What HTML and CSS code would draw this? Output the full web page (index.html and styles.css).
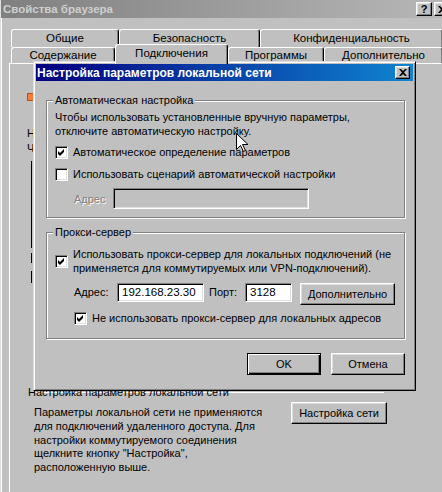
FILE: index.html
```html
<!DOCTYPE html>
<html lang="ru">
<head>
<meta charset="utf-8">
<title>Свойства браузера</title>
<link rel="stylesheet" href="styles.css">
</head>
<body>
<div class="win">
  <div class="titlebar">
    <span class="wtitle">Свойства браузера</span>
    <div class="capbtns">
      <span class="capbtn help">?</span>
      <span class="capbtn">
        <svg width="8" height="7" viewBox="0 0 8 7"><path d="M0 0h2l2 2 2-2h2L5 3.5 8 7H6L4 5 2 7H0l3-3.5z" fill="#000"/></svg>
      </span>
    </div>
  </div>
  <div class="tabs">
    <div class="tabrow back">
      <div class="tab w1">Общие</div>
      <div class="tab w2">Безопасность</div>
      <div class="tab w3">Конфиденциальность</div>
    </div>
    <div class="tabrow front">
      <div class="tab w4">Содержание</div>
      <div class="tab w5 sel">Подключения</div>
      <div class="tab w6">Программы</div>
      <div class="tab w7">Дополнительно</div>
    </div>
  </div>
  <div class="panel">
    <span class="conn-icon"></span>
    <p class="hint">Н<br>Ч</p>
    <div class="listbox"></div>
    <div class="focusdash"></div>
    <div class="lan-head"><span class="lan-title">Настройка параметров локальной сети</span></div>
    <div class="lan-row">
      <p class="lan-text">Параметры локальной сети не применяются<br>для подключений удаленного доступа. Для<br>настройки коммутируемого соединения<br>щелкните кнопку "Настройка",<br>расположенную выше.</p>
      <span class="btn lan-btn">Настройка сети</span>
    </div>
  </div>
</div>

<div class="dialog">
  <div class="dtitlebar">
    <span class="dtitle">Настройка параметров локальной сети</span>
    <span class="capbtn dclose">
      <svg width="8" height="7" viewBox="0 0 8 7"><path d="M0 0h2l2 2 2-2h2L5 3.5 8 7H6L4 5 2 7H0l3-3.5z" fill="#000"/></svg>
    </span>
  </div>

  <div class="group g1">
    <span class="legend">Автоматическая настройка</span>
    <p class="gtext">Чтобы использовать установленные вручную параметры,<br>отключите автоматическую настройку.</p>
    <div class="chkrow r1">
      <span class="chk on"><svg width="7" height="7" viewBox="0 0 7 7"><path d="M0 2l2 2 4-4v3L2 7 0 5z" fill="#000"/></svg></span>
      <span class="chklabel">Автоматическое определение параметров</span>
    </div>
    <div class="chkrow r2">
      <span class="chk"></span>
      <span class="chklabel">Использовать сценарий автоматической настройки</span>
    </div>
    <div class="addrrow">
      <span class="dislabel">Адрес</span>
      <span class="field disabled"></span>
    </div>
  </div>

  <div class="group g2">
    <span class="legend">Прокси-сервер</span>
    <div class="chkrow r3">
      <span class="chk on"><svg width="7" height="7" viewBox="0 0 7 7"><path d="M0 2l2 2 4-4v3L2 7 0 5z" fill="#000"/></svg></span>
      <span class="chklabel">Использовать прокси-сервер для локальных подключений (не<br>применяется для коммутируемых или VPN-подключений).</span>
    </div>
    <div class="proxyrow">
      <span class="plabel l-addr">Адрес:</span>
      <span class="field f-addr">192.168.23.30</span>
      <span class="plabel l-port">Порт:</span>
      <span class="field f-port">3128</span>
      <span class="btn adv-btn">Дополнительно</span>
    </div>
    <div class="chkrow r4">
      <span class="chk on"><svg width="7" height="7" viewBox="0 0 7 7"><path d="M0 2l2 2 4-4v3L2 7 0 5z" fill="#000"/></svg></span>
      <span class="chklabel">Не использовать прокси-сервер для локальных адресов</span>
    </div>
  </div>

  <div class="dbuttons">
    <span class="btn default">OK</span>
    <span class="btn">Отмена</span>
  </div>
</div>

<svg class="cursor" width="12" height="19" viewBox="0 0 12 19"><path d="M0.5 0.5v16l4-4 3 6 2-1-3-6h5.5z" fill="#fff" stroke="#000" stroke-width="1"/></svg>
</body>
</html>
```
FILE: styles.css
```css
html, body {
  margin: 0;
  padding: 0;
}
body {
  width: 442px;
  height: 492px;
  overflow: hidden;
  position: relative;
  background: #c0c0c0;
  font-family: "Liberation Sans", Arial, sans-serif;
  font-size: 11px;
  color: #000;
}
p { margin: 0; }

.win {
  width: 452px;
  height: 492px;
  box-sizing: border-box;
  border-left: 1px solid #dfdfdf;
  box-shadow: inset 1px 0 #fff;
  background: #c0c0c0;
}

.titlebar {
  height: 18px;
  display: flex;
  align-items: center;
  padding: 0 2px 0 2px;
  background: linear-gradient(to right, #808080, #b8b8b8);
}
.wtitle {
  font-weight: bold;
  font-size: 11.5px;
  color: #cfcfcf;
}
.capbtns {
  margin-left: auto;
  display: flex;
  gap: 2px;
}
.capbtn {
  width: 16px;
  height: 14px;
  box-sizing: border-box;
  background: #c0c0c0;
  border: 1px solid;
  border-color: #fff #000 #000 #fff;
  box-shadow: inset -1px -1px #808080, inset 1px 1px #dfdfdf;
  display: flex;
  align-items: center;
  justify-content: center;
}
.capbtn.help {
  font-weight: bold;
  font-size: 11px;
  line-height: 12px;
}

.tabs {
  margin-top: 11px;
  padding-left: 10px;
}
.tabrow {
  display: flex;
}
.tabrow.back {
  height: 18px;
}
.tabrow.front {
  height: 16px;
  align-items: flex-end;
}
.tab {
  box-sizing: border-box;
  height: 18px;
  border-top: 1px solid #fff;
  border-left: 1px solid #fff;
  border-right: 1px solid #000;
  box-shadow: inset -1px 0 #808080;
  border-radius: 3px 3px 0 0;
  text-align: center;
  line-height: 16px;
  white-space: nowrap;
  background: #c0c0c0;
  font-size: 11.5px;
}
.tabrow.front .tab {
  height: 16px;
  line-height: 15px;
}
.tabrow.front .tab.sel {
  height: 20px;
  margin-bottom: -1px;
  line-height: 17px;
  position: relative;
  z-index: 1;
}
.w1 { width: 108px; }
.w2 { width: 141px; }
.w3 { width: 183px; }
.w4 { width: 104px; }
.w5 { width: 113px; }
.w6 { width: 96px; }
.w7 { width: 119px; }

.panel {
  margin-left: 8px;
  border-top: 1px solid #fff;
  border-left: 1px solid #fff;
  height: 440px;
  padding-left: 17px;
}
.conn-icon {
  display: block;
  margin-top: 29px;
  width: 5px;
  height: 6px;
  background: #f08040;
  border: 1px solid #c05010;
}
.hint {
  margin-top: 25px;
  line-height: 14.5px;
  white-space: nowrap;
}
.listbox {
  margin-top: 6px;
  margin-left: 4px;
  height: 87px;
  border-left: 1px solid #000;
}
.focusdash {
  margin-top: 5px;
  margin-left: 4px;
  width: 1px;
  height: 31px;
  background: linear-gradient(to bottom, #000 0 10px, transparent 10px 18px, #000 18px 30px, transparent 30px);
}
.lan-head {
  margin-top: 101px;
  margin-left: 1px;
  position: relative;
  line-height: 14px;
  height: 14px;
}
.lan-head::before {
  content: "";
  position: absolute;
  left: 4px;
  top: 7px;
  width: 352px;
  height: 1px;
  background: #fff;
}
.lan-title {
  position: relative;
  white-space: nowrap;
}
.lan-row {
  display: flex;
  align-items: flex-start;
  margin-top: 3px;
}
.lan-text {
  margin-top: 4px;
  margin-left: 7px;
  width: 257px;
  line-height: 13.75px;
  white-space: nowrap;
}

.btn {
  box-sizing: border-box;
  height: 22px;
  background: #c0c0c0;
  border: 1px solid;
  border-color: #fff #000 #000 #fff;
  box-shadow: inset -1px -1px #808080, inset 1px 1px #dfdfdf;
  display: flex;
  align-items: center;
  justify-content: center;
  white-space: nowrap;
}
.lan-btn {
  width: 96px;
}

.dialog {
  position: absolute;
  left: 33px;
  top: 61px;
  width: 383px;
  height: 330px;
  box-sizing: border-box;
  border: 1px solid;
  border-color: #dfdfdf #000 #000 #dfdfdf;
  box-shadow: inset 1px 1px #fff, inset -1px -1px #808080;
  padding: 2px;
  background: #c0c0c0;
}
.dtitlebar {
  height: 17px;
  display: flex;
  align-items: center;
  background: linear-gradient(to right, #000080, #1084d0);
  padding-left: 1px;
}
.dtitle {
  color: #fff;
  font-weight: bold;
  font-size: 12px;
  white-space: nowrap;
}
.dclose {
  margin-left: auto;
  margin-right: 3px;
  width: 15px;
  height: 13px;
}

.group {
  margin-left: 10px;
  margin-right: 8px;
  border: 1px solid #808080;
  box-shadow: 1px 1px 0 #fff, inset 1px 1px 0 #fff;
  padding-left: 8px;
  display: flex;
  flex-direction: column;
  align-items: flex-start;
}
.g1 {
  margin-top: 19px;
  padding-bottom: 8px;
}
.g2 {
  margin-top: 14px;
  padding-bottom: 13px;
}
.legend {
  margin-top: -8px;
  margin-left: -2px;
  padding: 0 2px;
  line-height: 14px;
  background: #c0c0c0;
}
.gtext {
  margin-top: 3px;
  line-height: 14px;
  white-space: nowrap;
}
.chkrow {
  display: flex;
  align-items: center;
  line-height: 14px;
  white-space: nowrap;
}
.r1 { margin-top: 7px; }
.r2 { margin-top: 8px; }
.r3 { margin-top: 8px; }
.r4 { margin-top: 6px; margin-left: 19px; }
.chk {
  flex: none;
  width: 13px;
  height: 13px;
  box-sizing: border-box;
  background: #fff;
  border: 1px solid;
  border-color: #808080 #fff #fff #808080;
  box-shadow: inset 1px 1px #000, inset -1px -1px #dfdfdf;
  display: flex;
  align-items: center;
  justify-content: center;
  margin-right: 5px;
}
.chk svg { display: block; }

.addrrow {
  margin-top: 7px;
  display: flex;
  align-items: center;
}
.dislabel {
  margin-left: 19px;
  width: 39px;
  color: #808080;
  text-shadow: 1px 1px 0 #fff;
}
.field {
  box-sizing: border-box;
  height: 19px;
  background: #fff;
  border: 1px solid;
  border-color: #808080 #fff #fff #808080;
  box-shadow: inset 1px 1px #000, inset -1px -1px #dfdfdf;
  padding-left: 4px;
  line-height: 17px;
  white-space: nowrap;
  font-size: 11.5px;
}
.field.disabled {
  width: 196px;
  height: 21px;
  background: #c0c0c0;
}

.proxyrow {
  margin-top: 8px;
  display: flex;
  align-items: flex-start;
}
.plabel {
  line-height: 19px;
  white-space: nowrap;
}
.l-addr { margin-left: 19px; width: 43px; }
.f-addr { width: 87px; }
.l-port { margin-left: 5px; width: 36px; }
.f-port { width: 47px; }
.adv-btn { margin-left: 8px; width: 95px; }

.dbuttons {
  display: flex;
  justify-content: flex-end;
  gap: 10px;
  margin-top: 14px;
  padding-right: 8px;
}
.dbuttons .btn {
  width: 74px;
}
.btn.default {
  border-color: #000;
  box-shadow: inset 1px 1px #fff, inset -1px -1px #000, inset -2px -2px #808080;
}

.cursor {
  position: absolute;
  left: 236px;
  top: 133px;
}
```
